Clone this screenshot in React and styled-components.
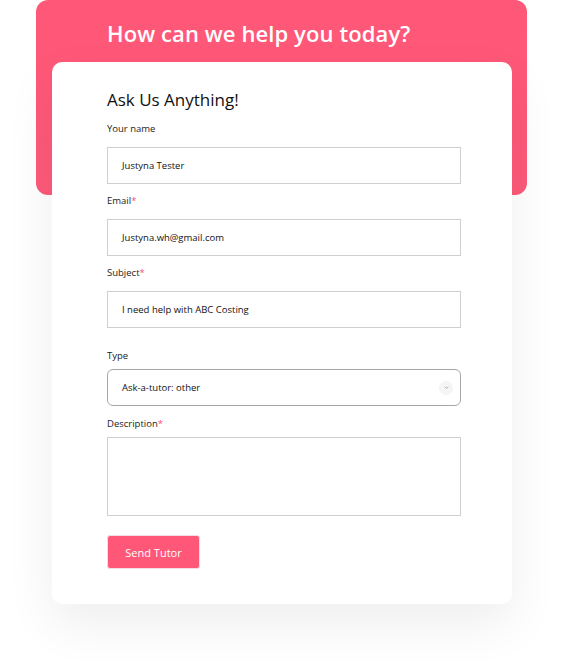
import React from 'react'
import styled, { createGlobalStyle } from 'styled-components'

const Global = createGlobalStyle`
  * { box-sizing: border-box; }
  body {
    margin: 0;
    background: #fff;
    font-family: "Open Sans", "Noto Sans", sans-serif;
  }
`;

const Page = styled.div`
  width: 570px;
  height: 663px;
  padding-left: 36px;
  overflow: hidden;
`;

const Frame = styled.div`
  width: 491px;
`;

const Banner = styled.div`
  height: 195px;
  border-radius: 12px;
  background: linear-gradient(180deg, #ff5777 0%, #fd5a79 100%);
  padding: 19px 0 0 71px;
`;

const Heading = styled.h1`
  margin: 0;
  color: #fff;
  font-size: 22px;
  font-weight: 600;
  line-height: 28px;
  letter-spacing: 0.1px;
`;

const Card = styled.div`
  margin: -133px 0 0 16px;
  width: 460px;
  height: 542px;
  background: #fff;
  border-radius: 10px;
  padding: 26px 51px 0 55px;
  box-shadow: 0 20px 50px rgba(0, 0, 0, 0.07);
`;

const Title = styled.h2`
  margin: 0 0 10px;
  font-size: 17px;
  font-weight: 400;
  color: #111;
  line-height: 24px;
`;

const Field = styled.div`
  display: flex;
  flex-direction: column;
  margin-top: ${p => p.$top || 0}px;
`;

const Label = styled.label`
  font-size: 9.5px;
  color: #222;
  line-height: 14px;
  margin-bottom: ${p => p.$gap ?? 11}px;
  span { color: #ff4d6d; }
`;

const Input = styled.div`
  height: 37px;
  border: 1px solid #cfcfcf;
  display: flex;
  align-items: center;
  padding-left: 14px;
  font-size: 9.5px;
  font-weight: 500;
  color: #111;
  margin-bottom: 3px;
`;

const Select = styled(Input)`
  border-color: #a6a6a6;
  border-radius: 6px;
  justify-content: space-between;
  padding-right: 7px;
`;

const Chevron = styled.span`
  width: 14px;
  height: 14px;
  border-radius: 50%;
  background: #f5f5f5;
  display: flex;
  align-items: center;
  justify-content: center;
`;

const TextArea = styled.div`
  height: 79px;
  border: 1px solid #cfcfcf;
`;

const Button = styled.button`
  margin-top: 19px;
  width: 93px;
  height: 34px;
  border: 1px solid #f4dde2;
  border-radius: 3px;
  background: #ff5777;
  color: #fff;
  font-family: inherit;
  font-size: 11px;
`;

export default function App() {
  return (
    <Page>
      <Global />
      <Frame>
        <Banner>
          <Heading>How can we help you today?</Heading>
        </Banner>
        <Card>
          <Title>Ask Us Anything!</Title>
          <Field>
            <Label>Your name</Label>
            <Input>Justyna Tester</Input>
          </Field>
          <Field $top={7}>
            <Label>Email<span>*</span></Label>
            <Input>Justyna.wh@gmail.com</Input>
          </Field>
          <Field $top={7}>
            <Label>Subject<span>*</span></Label>
            <Input>I need help with ABC Costing</Input>
          </Field>
          <Field $top={18}>
            <Label $gap={6}>Type</Label>
            <Select>
              Ask-a-tutor: other
              <Chevron>
                <svg width="7" height="7" viewBox="0 0 8 8" fill="none">
                  <path d="M2 3l2 2 2-2" stroke="#999" strokeWidth="0.9" />
                </svg>
              </Chevron>
            </Select>
          </Field>
          <Field $top={8}>
            <Label $gap={6}>Description<span>*</span></Label>
            <TextArea />
          </Field>
          <Button>Send Tutor</Button>
        </Card>
      </Frame>
    </Page>
  );
}
